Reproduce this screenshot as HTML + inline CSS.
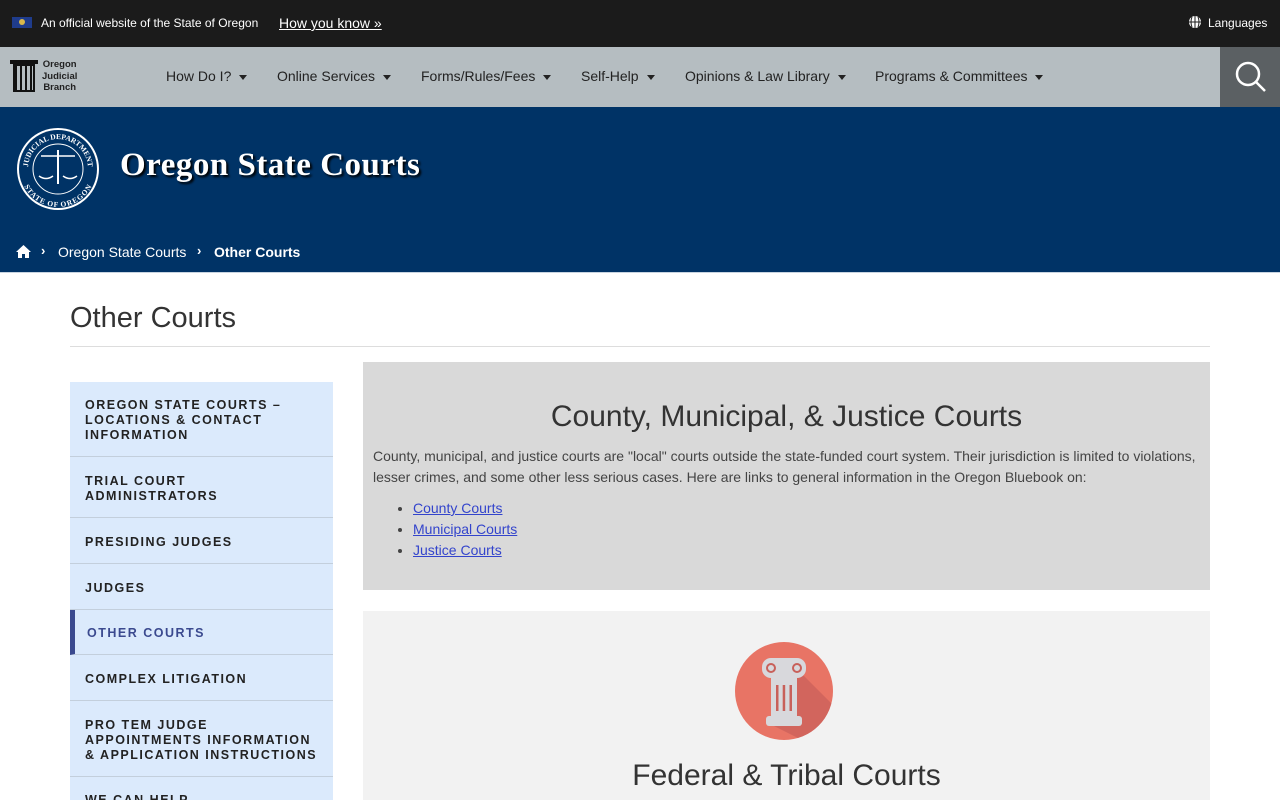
<!DOCTYPE html>
<html style="overflow:hidden"><head><meta charset="utf-8"><style>
*{box-sizing:border-box;margin:0;padding:0}
body{width:1280px;height:800px;overflow:hidden;font-family:"Liberation Sans",Arial,sans-serif;background:#fff;color:#333;position:relative}
.top{position:absolute;top:0;left:0;width:1280px;height:47px;background:#1b1b1b;color:#fff;font-size:12px}
.nav{position:absolute;top:47px;left:0;width:1280px;height:60px;background:#b5bdc1}
.nav .it{position:absolute;top:21px;font-size:14px;color:#222}
.caret{display:inline-block;width:0;height:0;border-left:4.5px solid transparent;border-right:4.5px solid transparent;border-top:5px solid #222;margin-left:8px;vertical-align:middle}
.hdr{position:absolute;top:107px;left:0;width:1280px;height:166px;background:#003366;border-bottom:1px solid #c8d4e0}
.side{position:absolute;left:70px;top:382px;width:263px;height:418px;overflow:hidden;background:#dbeafc}
.side div{border-bottom:1px solid #c3cfdc;padding-left:15px;padding-top:3px;font-weight:bold;font-size:12.5px;letter-spacing:1.5px;color:#222;line-height:15px;display:flex;align-items:center}
</style></head><body>
<div class="top">
<div style="position:absolute;left:12px;top:17px;width:20px;height:11px;background:#1f3c8c"><div style="position:absolute;left:7px;top:2px;width:6px;height:6px;border-radius:50%;background:#d9b84a"></div></div>
<span style="position:absolute;left:41px;top:16px">An official website of the State of Oregon</span>
<span style="position:absolute;left:279px;top:15px;font-size:14px;text-decoration:underline">How you know »</span>
<svg style="position:absolute;left:1189px;top:16px" width="12" height="12"><circle cx="6" cy="6" r="6" fill="#fff"/><path d="M0 6H12M6 0V12M3 1Q1 6 3 11M9 1Q11 6 9 11" stroke="#1b1b1b" stroke-width="1" fill="none"/></svg>
<span style="position:absolute;left:1208px;top:16px">Languages</span>
</div>
<div class="nav">
<div style="position:absolute;left:10px;top:13px;width:28px;height:4px;background:#111"></div>
<div style="position:absolute;left:13px;top:17px;width:22px;height:28px;border:2px solid #111;background:repeating-linear-gradient(90deg,#111 0 2px,transparent 2px 5px)"></div>
<div style="position:absolute;left:42px;top:12px;font-size:9.5px;font-weight:bold;line-height:11.5px;text-align:center;color:#222">Oregon<br>Judicial<br>Branch</div>
<span class="it" style="left:166px">How Do I?<i class="caret"></i></span>
<span class="it" style="left:277px">Online Services<i class="caret"></i></span>
<span class="it" style="left:421px">Forms/Rules/Fees<i class="caret"></i></span>
<span class="it" style="left:581px">Self-Help<i class="caret"></i></span>
<span class="it" style="left:685px">Opinions &amp; Law Library<i class="caret"></i></span>
<span class="it" style="left:875px">Programs &amp; Committees<i class="caret"></i></span>
<div style="position:absolute;left:1220px;top:0;width:60px;height:60px;background:#5b6063">
<svg width="60" height="60"><circle cx="28" cy="27" r="11" fill="none" stroke="#fff" stroke-width="2.5"/><line x1="36" y1="35" x2="45" y2="44" stroke="#fff" stroke-width="2.5"/></svg></div>
</div>
<div class="hdr">
<svg style="position:absolute;left:15px;top:19px" width="86" height="86"><defs><path id="ta" d="M13 43 A30 30 0 0 1 73 43"/><path id="tb" d="M11 43 A32 32 0 0 0 75 43"/></defs><circle cx="43" cy="43" r="41" fill="#fff"/><circle cx="43" cy="43" r="39" fill="#003366"/><circle cx="43" cy="43" r="25" fill="none" stroke="#fff" stroke-width="1"/><line x1="26" y1="30" x2="60" y2="30" stroke="#fff" stroke-width="1.5"/><line x1="43" y1="24" x2="43" y2="58" stroke="#fff" stroke-width="2"/><path d="M24 50 Q31 55 38 50 M48 50 Q55 55 62 50" stroke="#fff" fill="none" stroke-width="1.5"/><text fill="#fff" font-size="7.5" font-family="Liberation Serif" font-weight="bold"><textPath href="#ta" startOffset="50%" text-anchor="middle">JUDICIAL DEPARTMENT</textPath></text><text fill="#fff" font-size="7.5" font-family="Liberation Serif" font-weight="bold" dy="6"><textPath href="#tb" startOffset="50%" text-anchor="middle">STATE OF OREGON</textPath></text></svg>
<div style="position:absolute;left:120px;top:40px;font-family:'Liberation Serif',serif;font-weight:bold;font-size:33px;letter-spacing:0.5px;color:#fff;text-shadow:2px 2px 2px #000">Oregon State Courts</div>
<svg style="position:absolute;left:15px;top:137px" width="17" height="15"><path d="M8.5 1 L1 8 H3 V14 H7 V10 H10 V14 H14 V8 H16 Z" fill="#fff"/></svg>
<span style="position:absolute;left:41px;top:136px;color:#fff;font-size:13px;font-weight:bold">›</span>
<span style="position:absolute;left:58px;top:137px;color:#fff;font-size:14px">Oregon State Courts</span>
<span style="position:absolute;left:197px;top:136px;color:#fff;font-size:13px;font-weight:bold">›</span>
<span style="position:absolute;left:214px;top:137px;color:#fff;font-size:14px;font-weight:bold">Other Courts</span>
</div>
<div style="position:absolute;left:70px;top:302px;font-size:29px;color:#333">Other Courts</div>
<div style="position:absolute;left:70px;top:346px;width:1140px;height:1px;background:#ddd"></div>
<div class="side">
<div style="height:75px">OREGON STATE COURTS –<br>LOCATIONS &amp; CONTACT<br>INFORMATION</div>
<div style="height:61px">TRIAL COURT<br>ADMINISTRATORS</div>
<div style="height:46px">PRESIDING JUDGES</div>
<div style="height:46px">JUDGES</div>
<div style="height:45px;border-left:5px solid #3b4a8f;padding-left:12px;color:#3b4a8f">OTHER COURTS</div>
<div style="height:46px">COMPLEX LITIGATION</div>
<div style="height:76px">PRO TEM JUDGE<br>APPOINTMENTS INFORMATION<br>&amp; APPLICATION INSTRUCTIONS</div>
<div style="height:40px;align-items:flex-start;padding-top:16px">WE CAN HELP</div>
</div>
<div style="position:absolute;left:363px;top:362px;width:847px;height:228px;background:#d9d9d9">
<div style="position:absolute;top:38px;width:100%;text-align:center;font-size:30px;color:#333">County, Municipal, &amp; Justice Courts</div>
<div style="position:absolute;left:10px;top:84px;width:830px;font-size:14px;line-height:21px;color:#444">County, municipal, and justice courts are "local" courts outside the state-funded court system. Their jurisdiction is limited to violations, lesser crimes, and some other less serious cases. Here are links to general information in the Oregon Bluebook on:</div>
<ul style="position:absolute;left:50px;top:136px;font-size:14px;line-height:21px;color:#444">
<li><a style="color:#3344cc;text-decoration:underline">County Courts</a></li><li><a style="color:#3344cc;text-decoration:underline">Municipal Courts</a></li><li><a style="color:#3344cc;text-decoration:underline">Justice Courts</a></li></ul>
</div>
<div style="position:absolute;left:363px;top:611px;width:847px;height:189px;background:#f2f2f2">
<svg style="position:absolute;left:371px;top:30px" width="100" height="100"><defs><clipPath id="c"><circle cx="50" cy="50" r="49"/></clipPath></defs><circle cx="50" cy="50" r="49" fill="#e87465"/><path clip-path="url(#c)" d="M60 25 L100 65 L100 100 L70 100 L40 85 Z" fill="#c9605a" opacity=".7"/><rect x="28" y="17" width="44" height="20" rx="9" fill="#d8d8dc"/><circle cx="37" cy="27" r="4" fill="none" stroke="#c8605a" stroke-width="2"/><circle cx="63" cy="27" r="4" fill="none" stroke="#c8605a" stroke-width="2"/><rect x="37" y="37" width="26" height="38" fill="#d8d8dc"/><rect x="42" y="44" width="2.5" height="26" fill="#c8605a"/><rect x="48.7" y="44" width="2.5" height="26" fill="#c8605a"/><rect x="55.5" y="44" width="2.5" height="26" fill="#c8605a"/><rect x="32" y="75" width="36" height="10" rx="3" fill="#d8d8dc"/></svg>
<div style="position:absolute;top:148px;width:100%;text-align:center;font-size:30px;color:#333">Federal &amp; Tribal Courts</div>
</div>
</body></html>
